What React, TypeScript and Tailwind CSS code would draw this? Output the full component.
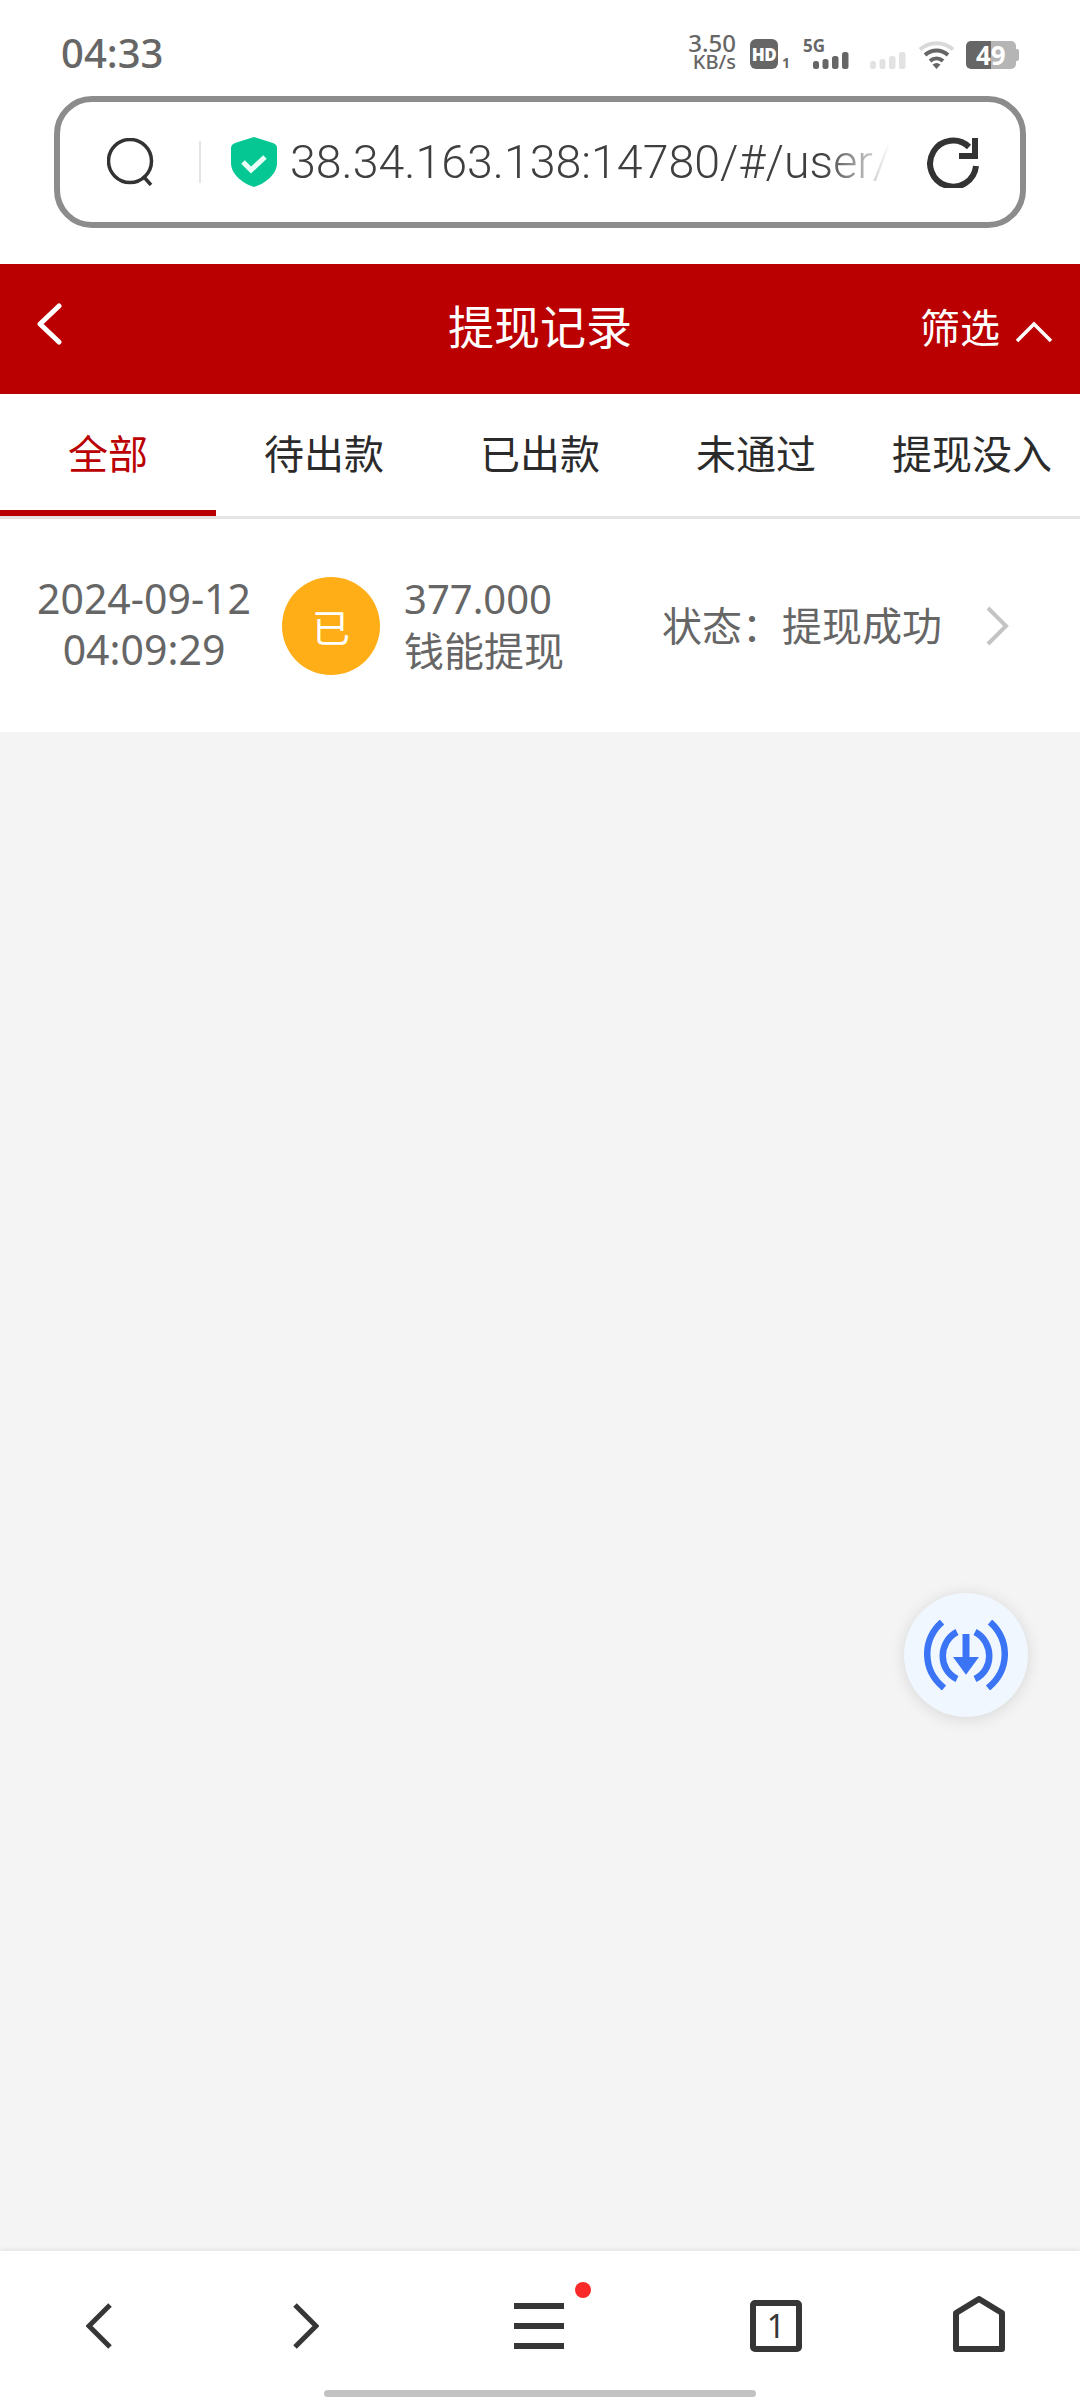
import React from 'react';

const cjk = { fontFamily: '"Noto Sans CJK SC", sans-serif' };

const tabs = ['全部', '待出款', '已出款', '未通过', '提现没入'];

function StatusIcons() {
  return (
    <div className="flex items-end h-[38px] text-[#666666] [font-family:'Noto_Sans',sans-serif]">
      <div className="flex flex-col items-end w-[46px] font-medium">
        <span className="text-[24px] leading-[21px]">3.50</span>
        <span className="text-[20px] leading-[17px]">KB/s</span>
      </div>
      <div className="flex items-end ml-[14px] mb-[1px] w-[40px]">
        <div className="flex items-center justify-center w-[30px] h-[30px] rounded-[6px] bg-[#666666] text-white text-[17px] leading-none font-black tracking-[-0.5px]">HD</div>
        <span className="ml-[4px] text-[14px] leading-[12px] font-bold">1</span>
      </div>
      <div className="relative ml-[13px] mb-[1px] w-[46px] h-[31px]">
        <span className="absolute left-0 -top-[1px] text-[17px] font-bold leading-[17px]">5G</span>
        <Signal className="absolute right-0 bottom-0" color="#666666" />
      </div>
      <Signal className="ml-[21px] mb-[1px]" color="#e2e2e2" />
      <svg className="ml-[12px] mb-[1px]" width="37" height="29" viewBox="0 0 37 29">
        <path d="M2 9.5C11 1 26 1 35 9.5" fill="none" stroke="#d9d9d9" strokeWidth="4" />
        <path d="M7 15C14 9 23 9 30 15" fill="none" stroke="#666666" strokeWidth="4" />
        <path d="M12 21C16 17.5 21 17.5 25 21" fill="none" stroke="#666666" strokeWidth="4" />
        <path d="M14.5 24.5L18.5 29L22.5 24.5C20 22.5 17 22.5 14.5 24.5Z" fill="#666666" />
      </svg>
      <div className="relative ml-[11px] mb-[1px] w-[54px] h-[28px] flex">
        <div className="w-[25px] h-full bg-[#666666] rounded-l-[5px]" />
        <div className="w-[25px] h-full bg-[#b5b5b5] rounded-r-[5px]" />
        <div className="w-[3px] h-[12px] mt-[8px] bg-[#b5b5b5] rounded-r-[2px]" />
        <span className="absolute left-[10px] top-0 text-[26px] leading-[28px] font-bold text-white">49</span>
      </div>
    </div>
  );
}

function Signal({ className, color }: { className?: string; color: string }) {
  return (
    <svg className={className} width="36" height="17" viewBox="0 0 36 17" fill={color}>
      <rect x="0" y="9" width="6" height="8" rx="2.5" />
      <rect x="9.5" y="7" width="6" height="10" rx="2.5" />
      <rect x="19" y="4" width="6.5" height="13" rx="2.5" />
      <rect x="29" y="0" width="6.5" height="17" rx="2.5" />
    </svg>
  );
}

function AddressBar() {
  return (
    <div className="h-[168px] px-[54px]">
      <div className="flex items-center h-[132px] border-[6px] border-[#8c8c8c] rounded-[38px]">
        <svg className="ml-[47px] shrink-0" width="48" height="48" viewBox="0 0 48 48" fill="none" stroke="#333333" strokeWidth="3.5">
          <circle cx="23" cy="23" r="21.5" />
          <path d="M36 38L44 47" />
        </svg>
        <div className="ml-[44px] w-[2px] h-[42px] bg-[#e4e4e4] shrink-0" />
        <svg className="ml-[30px] shrink-0" width="46" height="50" viewBox="0 0 46 50">
          <path d="M23 0L42 6Q46 7.500 46 11V26C46 38 33 47 23 50C13 47 0 38 0 26V11Q0 7.500 4 6Z" fill="#05c793" />
          <path d="M12 25L20 33L34 20" fill="none" stroke="#eafff8" strokeWidth="5" />
        </svg>
        <div className="ml-[13px] w-[606px] overflow-hidden whitespace-nowrap text-[46.5px] leading-[56px] text-[#3f3f3f] [font-family:Roboto,sans-serif] font-light [mask-image:linear-gradient(to_right,black_88%,transparent_99%)]">
          38.34.163.138:14780/#/user/
        </div>
        <svg className="ml-[31px] shrink-0" width="52" height="52" viewBox="0 0 52 52" fill="none" stroke="#333333" strokeWidth="6">
          <path d="M49 30A23 23 0 1 1 42 11" />
          <path d="M48 2V20H32" strokeWidth="6" />
        </svg>
      </div>
    </div>
  );
}

function Header() {
  return (
    <div className="relative flex items-center justify-center h-[130px] bg-[#ba0000] text-white" style={cjk}>
      <svg className="absolute left-[36px] top-[39px]" width="26" height="42" viewBox="0 0 26 42" fill="none" stroke="#fff" strokeWidth="5" strokeLinecap="round" strokeLinejoin="round">
        <path d="M23 3L4 21L23 39" />
      </svg>
      <span className="text-[46px] leading-[60px] pb-[10px]">提现记录</span>
      <div className="absolute right-[27px] top-0 h-full flex items-center gap-[15px]">
        <span className="text-[40px] leading-[60px] pb-[6px]">筛选</span>
        <svg className="mt-[5px]" width="38" height="22" viewBox="0 0 38 22" fill="none" stroke="#fff" strokeWidth="3.5">
          <path d="M2 20L19 3L36 20" />
        </svg>
      </div>
    </div>
  );
}

function Tabs() {
  return (
    <div className="flex h-[125px] border-b-[3px] border-[#e4e4e4]" style={cjk}>
      {tabs.map((t, i) => (
        <div
          key={t}
          className={
            i === 0
              ? 'flex-1 flex items-center justify-center text-[40px] text-[#ba0000] border-b-[6px] border-[#ba0000]'
              : 'flex-1 flex items-center justify-center text-[40px] text-[#2b2b2b] pb-[6px]'
          }
        >
          {t}
        </div>
      ))}
    </div>
  );
}

function RecordRow() {
  return (
    <div className="flex items-center h-[213px] text-[40px] text-[#666666]" style={cjk}>
      <div className="w-[282px] pl-[6px] mb-[3px] text-center leading-[51px] text-[41px] [font-family:'Noto_Sans',sans-serif]">
        <div>2024-09-12</div>
        <div>04:09:29</div>
      </div>
      <div className="flex items-center justify-center w-[98px] h-[98px] rounded-full bg-[#ffae17] text-[38px] text-white">已</div>
      <div className="ml-[24px] mb-[4px] w-[258px] leading-[51px]">
        <div className="[font-family:'Noto_Sans',sans-serif]">377.000</div>
        <div>钱能提现</div>
      </div>
      <div className="mb-[4px] whitespace-nowrap">状态：提现成功</div>
      <svg className="ml-[43px]" width="24" height="40" viewBox="0 0 24 40" fill="none" stroke="#c4c4c4" strokeWidth="4">
        <path d="M3 2L21 20L3 38" />
      </svg>
    </div>
  );
}

function DownloadFab() {
  return (
    <div className="absolute right-[52px] top-[1593px] flex items-center justify-center w-[124px] h-[124px] rounded-full bg-[#f0f7ff] shadow-[0_2px_16px_rgba(0,0,0,0.12)]">
      <svg width="84" height="70" viewBox="0 0 84 70" fill="none" stroke="#3b75f5" strokeWidth="6.5">
        <path d="M18 2C-2 20 -2 50 20 68" />
        <path d="M66 2C86 20 86 50 64 68" />
        <path d="M33 12C14 22 14 50 33 59" />
        <path d="M51 12C70 22 70 50 51 59" />
        <path d="M42 14V40" strokeWidth="7" />
        <path d="M31 38H53L42 53Z" fill="#3b75f5" stroke="#3b75f5" strokeWidth="2" />
      </svg>
    </div>
  );
}

function BottomBar() {
  return (
    <div className="relative flex items-center h-[149px] pl-[86px] bg-white shadow-[0_-2px_4px_rgba(0,0,0,0.06)]">
      <svg width="26" height="46" viewBox="0 0 26 46" fill="none" stroke="#363636" strokeWidth="5">
        <path d="M24 2L3 23L24 44" />
      </svg>
      <svg className="ml-[181px]" width="26" height="46" viewBox="0 0 26 46" fill="none" stroke="#363636" strokeWidth="5">
        <path d="M2 2L23 23L2 44" />
      </svg>
      <div className="relative flex flex-col gap-[14px] ml-[195px] w-[50px]">
        <div className="h-[6px] bg-[#363636]" />
        <div className="h-[6px] bg-[#363636]" />
        <div className="h-[6px] bg-[#363636]" />
        <div className="absolute -right-[27px] -top-[21px] w-[16px] h-[16px] rounded-full bg-[#fb2a2a]" />
      </div>
      <div className="flex items-center justify-center ml-[186px] w-[52px] h-[52px] border-[6px] border-[#363636] rounded-[5px] text-[32px] leading-none text-[#363636] [font-family:'Noto_Sans',sans-serif]">1</div>
      <svg className="ml-[151px] -mt-[4px]" width="52" height="56" viewBox="0 0 52 56" fill="none" stroke="#363636" strokeWidth="6" strokeLinejoin="round">
        <path d="M26 3L49 17V53H3V17Z" />
      </svg>
      <div className="absolute left-[324px] top-[139px] w-[432px] h-[7px] rounded-full bg-[#c2c2c2]" />
    </div>
  );
}

export default function App() {
  return (
    <div className="relative flex flex-col w-[1080px] h-[2400px] bg-white overflow-hidden">
      <div className="flex items-start justify-between h-[96px] pt-[32px] pl-[61px] pr-[60px]">
        <span className="text-[40px] leading-[42px] font-medium text-[#666666] [font-family:'Noto_Sans',sans-serif]">04:33</span>
        <StatusIcons />
      </div>
      <AddressBar />
      <Header />
      <Tabs />
      <RecordRow />
      <div className="flex-1 bg-[#f4f4f4]" />
      <DownloadFab />
      <BottomBar />
    </div>
  );
}
